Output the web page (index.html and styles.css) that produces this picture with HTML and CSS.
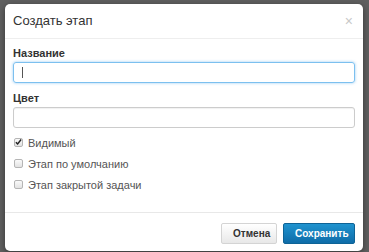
FILE: index.html
```html
<!DOCTYPE html>
<html lang="ru">
<head>
    <meta charset="UTF-8">
    <title>Создать этап</title>
    <link rel="stylesheet" href="styles.css">
</head>
<body>
    <!-- Modal dialog -->
    <div class="modal">
        <div class="modal-header">
            <h3>Создать этап</h3>
            <span class="close">&times;</span>
        </div>
        <div class="modal-body">
            <label class="field-label">Название</label>
            <div class="input focused"><span class="caret"></span></div>

            <label class="field-label">Цвет</label>
            <div class="input last"></div>

            <ul class="checks">
                <li><span class="box checked"><svg width="8" height="8" viewBox="0 0 8 8"><path d="M1 4.2 L3 6.3 L7 1.2" fill="none" stroke="#222" stroke-width="1.6"/></svg></span>Видимый</li>
                <li><span class="box"></span>Этап по умолчанию</li>
                <li><span class="box"></span>Этап закрытой задачи</li>
            </ul>
        </div>
        <div class="modal-footer">
            <button class="btn">Отмена</button>
            <button class="btn btn-primary">Сохранить</button>
        </div>
    </div>
</body>
</html>
```
FILE: styles.css
```css
/* Basic Reset */
* {
    margin: 0;
    padding: 0;
    box-sizing: border-box;
}

body {
    font-family: "Liberation Sans", Arial, sans-serif;
    background-color: #5f5f5f;
    padding: 4px 0 0 5px;
    height: 252px;
    overflow: hidden;
}

/* Modal */
.modal {
    width: 358px;
    background-color: #fff;
    border-radius: 5px;
    box-shadow: 0 2px 6px rgba(0, 0, 0, 0.45);
}

.modal-header {
    display: flex;
    justify-content: space-between;
    align-items: center;
    padding: 8px 8px 8px 8px;
    border-bottom: 1px solid #eee;
}

.modal-header h3 {
    font-size: 13px;
    font-weight: normal;
    line-height: 18px;
    color: #333;
}

.close {
    font-size: 14px;
    line-height: 14px;
    color: #c8c8c8;
    margin-right: 2px;
}

.modal-body {
    padding: 7px 8px 17px 8px;
}

.field-label {
    display: block;
    font-size: 11px;
    font-weight: bold;
    line-height: 14px;
    color: #333;
    margin-bottom: 2px;
}

.input {
    height: 21px;
    border: 1px solid #ccc;
    border-radius: 3px;
    margin-bottom: 8px;
    box-shadow: inset 0 1px 1px rgba(0, 0, 0, 0.06);
    display: flex;
    align-items: center;
    padding-left: 8px;
}

.input.last {
    margin-bottom: 4px;
}

.input.focused {
    border-color: #7cc0ef;
    box-shadow: 0 0 3px rgba(82, 168, 236, 0.6);
}

.caret {
    width: 1px;
    height: 11px;
    background-color: #555;
}

/* Checkbox list */
.checks {
    list-style: none;
}

.checks li {
    display: flex;
    align-items: center;
    height: 21px;
    font-size: 11px;
    color: #555;
}

.box {
    width: 9px;
    height: 9px;
    margin: 0 5px 0 1px;
    border: 1px solid #b5b5b5;
    border-radius: 2px;
    background: linear-gradient(#fafafa, #e2e2e2);
    display: flex;
    align-items: center;
    justify-content: center;
}

.box svg {
    margin-top: -1px;
}

/* Footer */
.modal-footer {
    display: flex;
    justify-content: flex-end;
    gap: 6px;
    padding: 10px 8px 7px 8px;
    border-top: 1px solid #e8e8e8;
}

.btn {
    height: 21px;
    padding: 0 11px;
    font-family: "Liberation Sans", Arial, sans-serif;
    font-size: 10px;
    font-weight: bold;
    color: #333;
    border: 1px solid #d4d4d4;
    border-radius: 2px;
    background: linear-gradient(#ffffff, #e8e8e8);
}

.btn:first-child {
    width: 56px;
}

.btn-primary {
    width: 72px;
    color: #fff;
    border-color: #0e6396;
    background: linear-gradient(#1f93cf, #0f6ca8);
}
```
